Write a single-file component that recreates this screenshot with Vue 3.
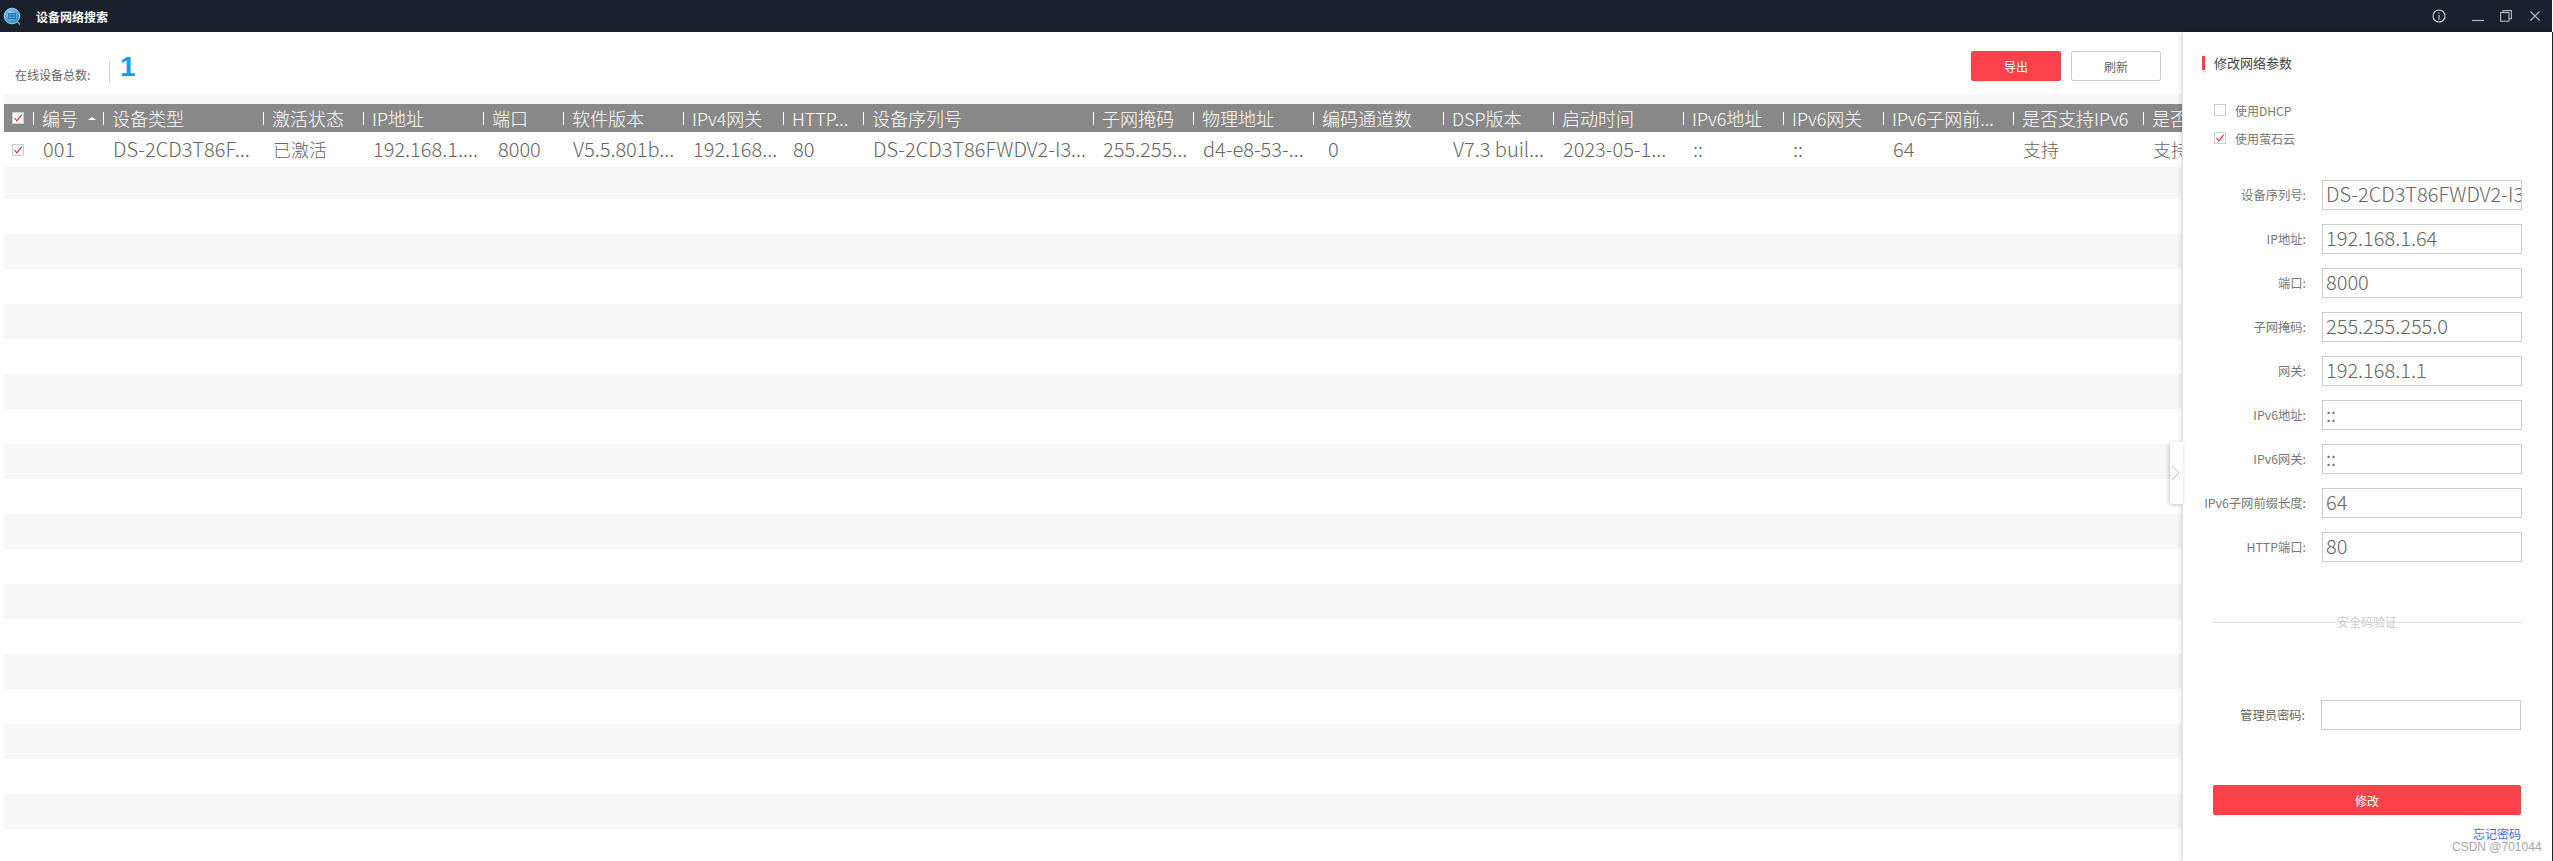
<script setup>
const columns = [
  { title: '编号', value: '001', w: 70, sort: true },
  { title: '设备类型', value: 'DS-2CD3T86F...', w: 160 },
  { title: '激活状态', value: '已激活', w: 100, cjk: true },
  { title: 'IP地址', value: '192.168.1....', w: 120 },
  { title: '端口', value: '8000', w: 80, indent: true },
  { title: '软件版本', value: 'V5.5.801b...', w: 120 },
  { title: 'IPv4网关', value: '192.168...', w: 100 },
  { title: 'HTTP...', value: '80', w: 80 },
  { title: '设备序列号', value: 'DS-2CD3T86FWDV2-I3...', w: 230 },
  { title: '子网掩码', value: '255.255...', w: 100 },
  { title: '物理地址', value: 'd4-e8-53-...', w: 120 },
  { title: '编码通道数', value: '0', w: 130, indent: true },
  { title: 'DSP版本', value: 'V7.3 buil...', w: 110 },
  { title: '启动时间', value: '2023-05-1...', w: 130 },
  { title: 'IPv6地址', value: '::', w: 100 },
  { title: 'IPv6网关', value: '::', w: 100 },
  { title: 'IPv6子网前...', value: '64', w: 130 },
  { title: '是否支持IPv6', value: '支持', w: 130, cjk: true },
  { title: '是否支持', value: '支持', w: 130, cjk: true }
]
const stripes = [32, 35, 35, 35, 35, 35, 35, 35, 35, 35, 35, 35, 35, 35, 35, 35, 35, 35, 35, 35]
const fields = [
  { label: '设备序列号:', value: 'DS-2CD3T86FWDV2-I3' },
  { label: 'IP地址:', value: '192.168.1.64' },
  { label: '端口:', value: '8000' },
  { label: '子网掩码:', value: '255.255.255.0' },
  { label: '网关:', value: '192.168.1.1' },
  { label: 'IPv6地址:', value: '::' },
  { label: 'IPv6网关:', value: '::' },
  { label: 'IPv6子网前缀长度:', value: '64' },
  { label: 'HTTP端口:', value: '80' }
]
</script>

<template>
  <div class="app">
    <header class="titlebar">
      <svg class="logo" width="20" height="22" viewBox="0 0 20 22">
        <defs>
          <radialGradient id="lg" cx="0.4" cy="0.35" r="0.75">
            <stop offset="0" stop-color="#8fd4f5" />
            <stop offset="1" stop-color="#1f7fc4" />
          </radialGradient>
        </defs>
        <circle cx="10" cy="11" r="7.8" fill="url(#lg)" stroke="#bfe3f5" stroke-width="0.8" />
        <rect x="6" y="8" width="8" height="6" rx="0.6" fill="#2a6fb8" />
        <path d="M7 9.5h6M7 11h6M7 12.5h6" stroke="#9fd0f0" stroke-width="0.6" stroke-dasharray="1 0.6" />
        <path d="M15.5 17l2.5 2.5" stroke="#6fa8c8" stroke-width="1.4" />
      </svg>
      <span class="app-title">设备网络搜索</span>
      <div class="controls">
        <svg width="14" height="14" viewBox="0 0 14 14" fill="none" stroke="#d4d6d9" stroke-width="1.1">
          <circle cx="7" cy="7" r="6" />
          <path d="M7 6v4.4M7 3.4v1.4" />
        </svg>
        <svg class="ctl-min" width="12" height="12" viewBox="0 0 12 12" fill="none" stroke="#b5b8bc" stroke-width="1.2">
          <path d="M0 10.5h12" />
        </svg>
        <svg class="ctl-max" width="12" height="12" viewBox="0 0 12 12" fill="none" stroke="#b5b8bc" stroke-width="1.1">
          <rect x="0.6" y="2.6" width="8.4" height="8.6" />
          <path d="M3 2.6V0.6h8.4v8H9" />
        </svg>
        <svg class="ctl-close" width="10" height="10" viewBox="0 0 10 10" fill="none" stroke="#b5b8bc" stroke-width="1.1">
          <path d="M0.5 0.5l9 9M9.5 0.5l-9 9" />
        </svg>
      </div>
    </header>

    <main class="main">
      <section class="content">
        <div class="toolbar">
          <span class="count-label">在线设备总数:</span>
          <span class="count-sep"></span>
          <span class="count">1</span>
          <button class="btn btn-red">导出</button>
          <button class="btn btn-plain">刷新</button>
        </div>

        <div class="table">
          <div class="top-strip"></div>
          <div class="thead">
            <div class="check-cell">
              <span class="box box-head">
                <svg width="10" height="10" viewBox="0 0 10 10" fill="none" stroke="#e0202c" stroke-width="1.1"><path d="M1.5 5l2.4 2.8L8.6 1.8" /></svg>
              </span>
            </div>
            <div v-for="c in columns" :key="c.title" class="th" :style="{ width: c.w + 'px' }">
              <i class="th-sep"></i>
              <span>{{ c.title }}</span>
              <i v-if="c.sort" class="sort"></i>
            </div>
          </div>
          <div class="trow">
            <div class="check-cell">
              <span class="box">
                <svg width="10" height="10" viewBox="0 0 10 10" fill="none" stroke="#e0202c" stroke-width="1.1"><path d="M1.5 5l2.4 2.8L8.6 1.8" /></svg>
              </span>
            </div>
            <div v-for="c in columns" :key="c.title" class="td" :class="{ indent: c.indent, cjk: c.cjk }" :style="{ width: c.w + 'px' }">{{ c.value }}</div>
          </div>
          <div v-for="(h, i) in stripes" :key="i" class="stripe" :class="{ odd: i % 2 === 0 }" :style="{ height: h + 'px' }"></div>
        </div>
      </section>

      <aside class="panel">
        <div class="handle">
          <svg width="9" height="16" viewBox="0 0 9 16" fill="none" stroke="#c4c4c4" stroke-width="1"><path d="M1 1l7 7-7 7" /></svg>
        </div>
        <h2 class="panel-title">修改网络参数</h2>
        <label class="opt opt-first"><span class="box"></span>使用DHCP</label>
        <label class="opt opt-second">
          <span class="box">
            <svg width="10" height="10" viewBox="0 0 10 10" fill="none" stroke="#e0202c" stroke-width="1.1"><path d="M1.5 5l2.4 2.8L8.6 1.8" /></svg>
          </span>使用萤石云
        </label>

        <div class="fields">
          <div v-for="f in fields" :key="f.label" class="field">
            <span class="field-label">{{ f.label }}</span>
            <div class="input">{{ f.value }}</div>
          </div>
        </div>

        <div class="divider">
          <i class="divider-line"></i>
          <span class="divider-text">安全码验证</span>
        </div>

        <div class="field pwd">
          <span class="field-label">管理员密码:</span>
          <div class="input"></div>
        </div>

        <button class="btn btn-red submit">修改</button>
        <a class="forgot">忘记密码</a>
      </aside>
    </main>
    <span class="watermark">CSDN @701044</span>
  </div>
</template>

<style>
html, body { margin: 0; background: #fff; overflow: hidden; }
</style>

<style scoped>
.app {
  position: relative;
  width: 2553px;
  height: 861px;
  overflow: hidden;
  display: flex;
  flex-direction: column;
  background: #fff;
  font-family: "Noto Sans CJK SC", "Noto Sans", sans-serif;
  color: #666;
}
.titlebar {
  height: 32px;
  flex: none;
  display: flex;
  align-items: center;
  background: #1a202c;
  border-right: 1px solid #fff;
}
.logo { margin-left: 2px; }
.app-title {
  margin-left: 14px;
  font-size: 12px;
  font-weight: 700;
  color: #fff;
}
.controls {
  margin-left: auto;
  display: flex;
  align-items: center;
  padding-right: 12px;
}
.ctl-min { margin-left: 26px; }
.ctl-max { margin-left: 16px; }
.ctl-close { margin-left: 18px; }

.main { flex: 1; display: flex; min-height: 0; }
.content { width: 2183px; flex: none; display: flex; flex-direction: column; overflow: hidden; }

.toolbar {
  height: 62px;
  flex: none;
  display: flex;
  align-items: center;
  padding-left: 15px;
  box-sizing: border-box;
}
.count-label { font-size: 12px; width: 94px; margin-top: 24px; line-height: 14px; color: #666; }
.count-sep { width: 1px; height: 22px; background: #ccc; margin-top: 17px; }
.count { margin: 8px 0 0 10px; font-size: 28px; font-weight: 700; line-height: 24px; color: #109cf5; font-family: "Liberation Sans", sans-serif; }
.btn {
  width: 90px;
  height: 30px;
  padding: 0;
  border-radius: 2px;
  font: inherit;
  font-size: 12px;
  box-sizing: border-box;
}
.toolbar .btn-red { margin-left: auto; margin-top: 6px; }
.toolbar .btn-plain { margin: 6px 22px 0 10px; }
.btn-red { border: 0; background: #fb424a; color: #fff; }
.btn-plain { border: 1px solid #ccc; background: #fff; color: #666; }

.table { margin-left: 4px; width: 2178px; overflow: hidden; flex: 1; }
.top-strip { height: 10px; background: #f7f7f7; }
.thead, .trow { display: flex; width: max-content; }
.thead { height: 28px; background: #888; color: #fff; font-size: 18px; font-weight: 300; align-items: center; }
.trow { height: 35px; font-size: 20px; font-weight: 300; align-items: center; background: #fff; color: #666; }
.check-cell { width: 29px; flex: none; display: flex; align-items: center; padding-left: 8px; box-sizing: border-box; }
.th { flex: none; display: flex; align-items: center; white-space: nowrap; line-height: 28px; }
.th-sep { width: 1px; height: 13px; background: #fff; margin-right: 8px; flex: none; }
.sort {
  margin-left: 10px;
  width: 0; height: 0;
  border-left: 4px solid transparent;
  border-right: 4px solid transparent;
  border-bottom: 3px solid #fff;
}
.td { flex: none; box-sizing: border-box; padding: 0 0 2px 10px; white-space: nowrap; line-height: 28px; }
.td.indent { padding-left: 15px; }
.td.cjk { font-size: 18px; }
.stripe { background: #fff; }
.stripe.odd { background: #f7f7f7; }

.box {
  width: 12px;
  height: 12px;
  flex: none;
  display: inline-flex;
  align-items: center;
  justify-content: center;
  border: 1px solid #ccc;
  box-sizing: border-box;
  background: #fff;
}
.box svg { flex: none; }

.panel {
  position: relative;
  width: 370px;
  flex: none;
  box-sizing: border-box;
  background: #fff;
  border-right: 1px solid #222;
  box-shadow: -2px 0 4px rgba(0, 0, 0, 0.14);
  padding-top: 24px;
}
.handle {
  position: absolute;
  left: -13px;
  top: 410px;
  width: 13px;
  height: 62px;
  background: #fff;
  border-radius: 3px 0 0 3px;
  box-shadow: -1px 1px 4px rgba(0, 0, 0, 0.22);
  display: flex;
  align-items: center;
}
.handle svg { margin-left: 1px; }
.panel-title {
  margin: 0 0 0 19px;
  padding-left: 9px;
  height: 14px;
  line-height: 14px;
  font-size: 13px;
  font-weight: 400;
  color: #444;
  border-left: 3px solid #fb424a;
}
.opt {
  display: flex;
  align-items: center;
  height: 12px;
  margin-left: 31px;
  font-size: 12px;
  color: #777;
  gap: 9px;
}
.opt-first { margin-top: 34px; }
.opt-second { margin-top: 16px; }
.fields { margin-top: 36px; display: flex; flex-direction: column; gap: 14px; }
.field { display: flex; align-items: center; height: 30px; }
.field-label { width: 123px; flex: none; text-align: right; font-size: 12.3px; color: #777; white-space: nowrap; }
.input {
  margin-left: 16px;
  width: 200px;
  height: 30px;
  flex: none;
  box-sizing: border-box;
  border: 1px solid #ccc;
  padding: 0 3px;
  font-size: 20px;
  font-weight: 300;
  line-height: 26px;
  color: #666;
  white-space: nowrap;
  overflow: hidden;
  background: #fff;
}
.divider { margin: 53px 0 0 29px; width: 310px; display: grid; justify-items: center; align-items: center; height: 14px; }
.divider-line { grid-area: 1 / 1; width: 100%; height: 1px; background: #e6e6e6; }
.divider-text { grid-area: 1 / 1; font-size: 12px; line-height: 14px; color: #ccc; }
.pwd { margin-top: 71px; margin-left: -1px; }
.pwd .field-label { color: #666; }
.submit { display: block; width: 308px; margin: 55px 0 0 30px; }
.forgot { display: block; width: 308px; margin: 12px 0 0 30px; text-align: right; font-size: 12px; line-height: 14px; color: #3a6fe6; }
.watermark {
  position: absolute;
  left: 2452px;
  top: 840px;
  font-family: "Liberation Sans", sans-serif;
  font-size: 12px;
  line-height: 14px;
  color: #a8a8a8;
}
</style>
